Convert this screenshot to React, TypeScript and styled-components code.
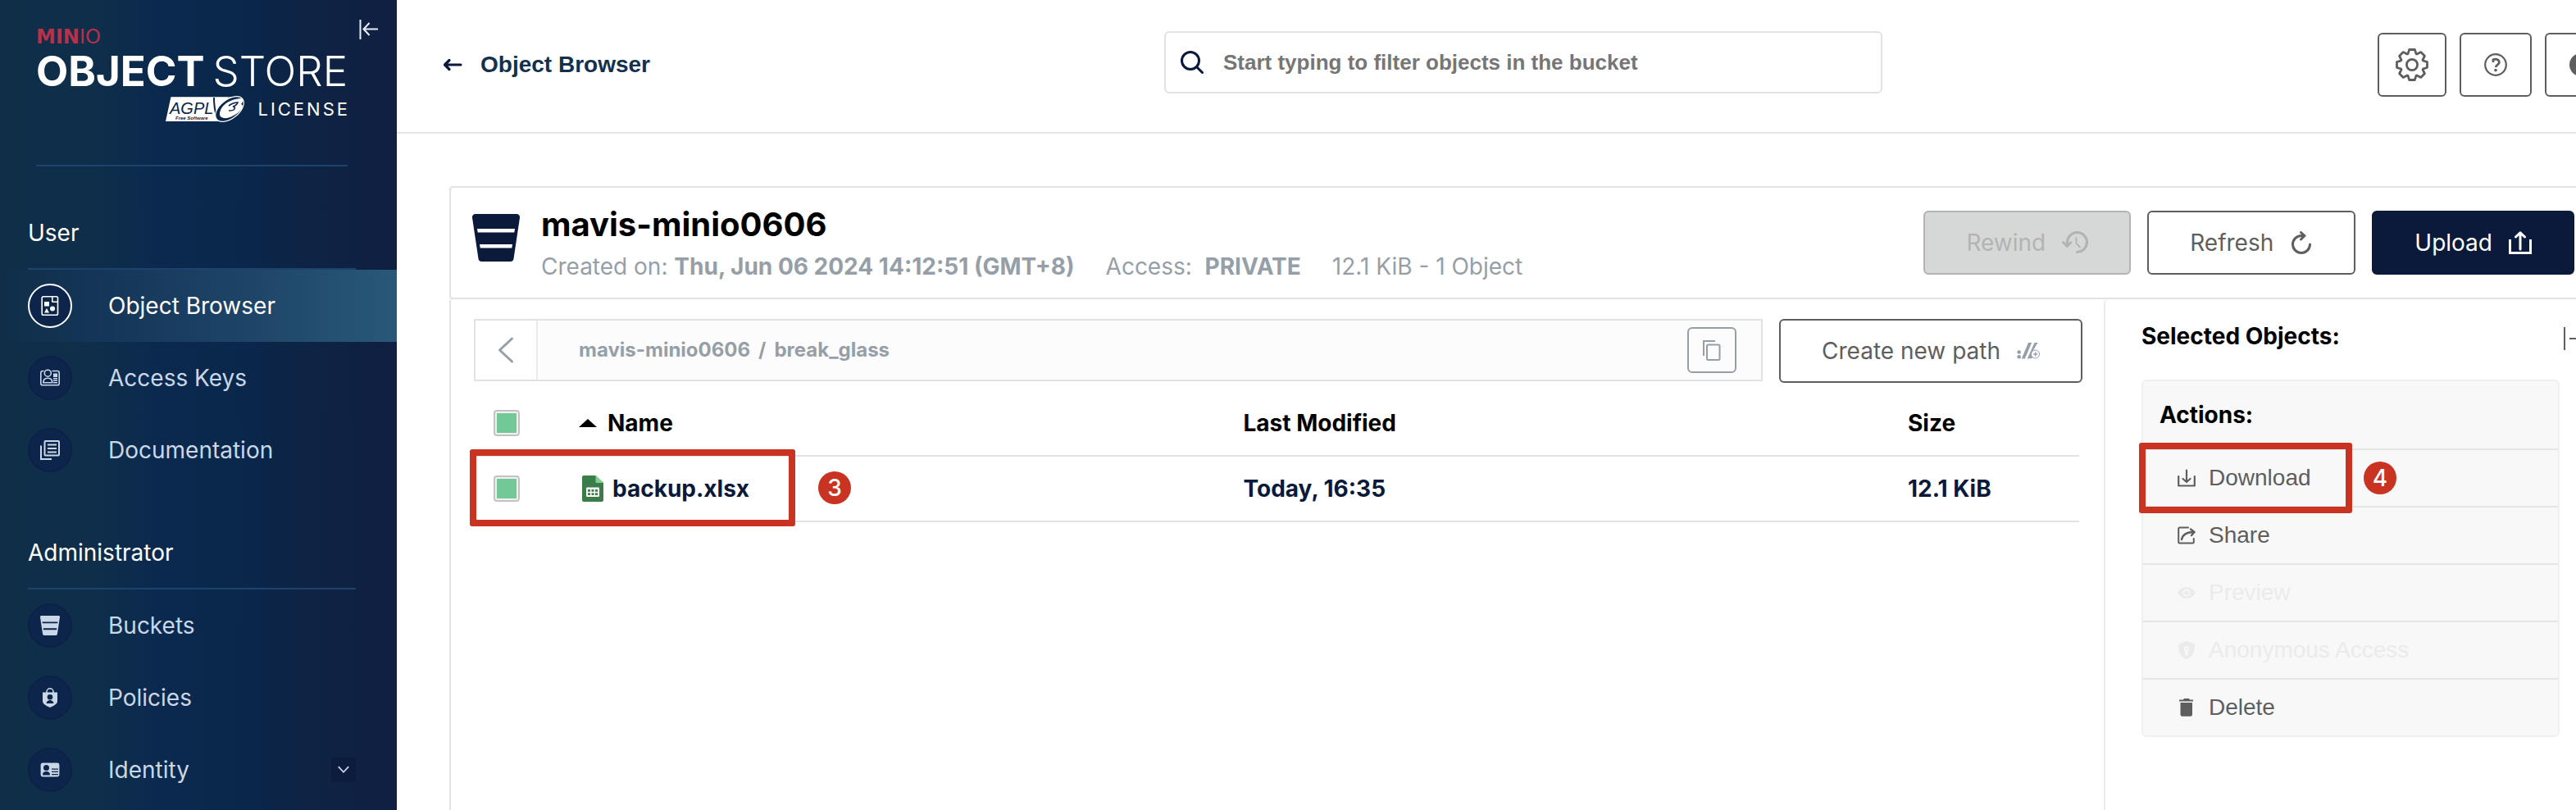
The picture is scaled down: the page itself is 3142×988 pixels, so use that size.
import React from "react";
import styled, { createGlobalStyle, css } from "styled-components";

const color = {
  navy: "#0b193b",
  ink: "#5e5e5e",
  muted: "#969fa8",
  line: "#e2e2e2",
  softLine: "#ebebeb",
  navText: "#c9d7e6",
  mark: "#c93322",
};

const GlobalStyle = createGlobalStyle`
  *, *::before, *::after { box-sizing: border-box; }
  body {
    margin: 0;
    overflow: hidden;
    background: #fff;
    color: #000;
    font-family: Inter, "Liberation Sans", sans-serif;
    font-size: 28px;
    line-height: 34px;
  }
  button, input { font: inherit; color: inherit; }
  button { margin: 0; padding: 0; border: 0; background: none; }
  a { color: inherit; text-decoration: none; }
  ul { margin: 0; padding: 0; list-style: none; }
  h1, h2, h3, p { margin: 0; font-size: inherit; }
`;

/* ---------- icons ---------- */

const Svg = styled.svg<{ $w: number; $h?: number }>`
  display: block;
  flex: none;
  width: ${(p) => p.$w}px;
  height: ${(p) => p.$h ?? p.$w}px;
`;

const CollapseIcon = () => (
  <Svg $w={24} viewBox="0 0 24 24" fill="none" stroke="currentColor" strokeWidth="2">
    <path d="M1.5 0v24M23 11.5H6M12.5 4 5.5 11.5l7 7.5" />
  </Svg>
);

const ExpandIcon = () => (
  <Svg $w={28} viewBox="0 0 28 28" fill="none" stroke="currentColor" strokeWidth="2">
    <path d="M1 0v28M7 14h20M19 5l8 9-8 9" />
  </Svg>
);

const BackArrowIcon = () => (
  <Svg $w={24} viewBox="0 0 24 24" fill="none" stroke="currentColor" strokeWidth="3.2" strokeLinecap="round" strokeLinejoin="round">
    <path d="M22 12H3M8 6.5 2.5 12 8 17.5" />
  </Svg>
);

const SearchIcon = () => (
  <Svg $w={28} viewBox="0 0 28 28" fill="none" stroke={color.navy} strokeWidth="3" strokeLinecap="round">
    <circle cx="12" cy="12" r="10.5" />
    <path d="m20 20 6.5 6.5" />
  </Svg>
);

const gearOutline = (() => {
  const tooth = [
    [-5, -13.4],
    [-3.3, -18.5],
    [3.3, -18.5],
    [5, -13.4],
  ];
  const points: string[] = [];
  for (let i = 0; i < 8; i++) {
    const a = (i * Math.PI) / 4;
    for (const [x, y] of tooth) {
      const px = 20 + x * Math.cos(a) - y * Math.sin(a);
      const py = 20 + x * Math.sin(a) + y * Math.cos(a);
      points.push(`${px.toFixed(2)} ${py.toFixed(2)}`);
    }
  }
  return `M${points.join("L")}Z`;
})();

const GearIcon = () => (
  <Svg $w={40} viewBox="0 0 40 40" fill="none" stroke="currentColor" strokeWidth="2.8" strokeLinejoin="round">
    <path d={gearOutline} />
    <circle cx="20" cy="20" r="6.6" />
  </Svg>
);

const HelpIcon = () => (
  <Svg $w={28} viewBox="0 0 28 28" fill="none" stroke="currentColor" strokeWidth="2.2">
    <circle cx="14" cy="14" r="12.8" />
    <path strokeWidth="2.8" d="M11 11V7.800c4-1.600 7.300.200 7.300 3.200 0 2.800-4 2.800-4 6" />
    <circle cx="14" cy="20.600" r="1.800" fill="currentColor" stroke="none" />
  </Svg>
);

const ThemeIcon = () => (
  <Svg $w={28} viewBox="0 0 28 28">
    <circle cx="14" cy="14" r="14" fill="currentColor" />
  </Svg>
);

const BucketGlyph = ({ size, gap }: { size: number; gap: string }) => (
  <Svg $w={size} viewBox="0 0 58 58">
    <path fill="currentColor" d="M4 0h50a4 4 0 0 1 4 4.500L50.500 54.500a4 4 0 0 1-4 3.500h-35a4 4 0 0 1-4-3.500L0 4.500A4 4 0 0 1 4 0z" />
    <path fill={gap} d="M6 18h46l-.7 4.500H6.700zM9 37h40l-.7 4.500H9.700z" />
  </Svg>
);

const RewindIcon = () => (
  <Svg $w={32} $h={28} viewBox="0 0 32 28" fill="none" stroke="currentColor">
    <path strokeWidth="3.200" strokeLinecap="round" d="M6.500 16V13.500a12 12 0 1 1 12 12" />
    <path strokeWidth="3" strokeLinecap="round" strokeLinejoin="round" d="m1.500 13.500 4.700 5 4.800-4.700" />
    <path strokeWidth="1.800" strokeLinecap="round" d="M17.500 8v7l4.500 4.500" />
  </Svg>
);

const RefreshIcon = () => (
  <Svg $w={28} viewBox="0 0 28 28" fill="none" stroke="currentColor" strokeWidth="3" strokeLinecap="round" strokeLinejoin="round">
    <path d="M24.500 16a10.500 10.500 0 1 1-10.500-10.500h3" />
    <path d="m13.500 1.500 4.500 4-4.500 4.500" />
  </Svg>
);

const UploadIcon = () => (
  <Svg $w={28} viewBox="0 0 28 28" fill="none" stroke="currentColor" strokeWidth="3">
    <path d="M1.500 10v16.500h25V10" />
    <path strokeLinecap="round" strokeLinejoin="round" d="M14 22V2M8.500 7 14 1.800 19.500 7" />
  </Svg>
);

const ChevronLeftIcon = () => (
  <Svg $w={20} $h={32} viewBox="0 0 20 32" fill="none" stroke="currentColor" strokeWidth="3" strokeLinecap="round" strokeLinejoin="round">
    <path d="M17.500 2 2.500 16l15 14" />
  </Svg>
);

const CopyIcon = () => (
  <Svg $w={22} $h={25} viewBox="0 0 22 25" fill="none" stroke="currentColor" strokeWidth="2">
    <path d="M1 19V1h14" />
    <rect x="5" y="5.500" width="15.500" height="18.500" rx="1.500" />
  </Svg>
);

const NewPathIcon = () => (
  <Svg $w={28} $h={20} viewBox="0 0 28 20" fill={color.muted}>
    <circle cx="2.700" cy="11.500" r="2.300" />
    <circle cx="2.700" cy="17.200" r="2.300" />
    <path d="M14 0h4.200L9.800 19.500H5.800zM21.500 0h4L18 12.500l1 6.500-6.200.5z" />
    <circle cx="22.500" cy="14" r="5" fill="#fff" stroke={color.muted} strokeWidth="1" />
    <path d="M22 11.500h1.400v1.800h1.800v1.400h-1.800v1.800H22v-1.800h-1.800v-1.400H22z" />
  </Svg>
);

const SheetFileIcon = () => (
  <Svg $w={26} $h={32} viewBox="0 0 26 32">
    <path fill="#3a7d49" d="M2 0h14.500L26 9v21a2 2 0 0 1-2 2H2a2 2 0 0 1-2-2V2a2 2 0 0 1 2-2z" />
    <path fill="#7fd093" d="M16.500 0 26 9h-8a1.500 1.500 0 0 1-1.500-1.500z" />
    <rect x="5" y="14.500" width="16" height="11.500" rx="1.200" fill="#fff" />
    <path fill="#3a7d49" d="M7 17h3v2.800H7zM11.500 17h3v2.800h-3zM16 17h3v2.800h-3zM7 21.300h3v2.800H7zM11.500 21.300h3v2.800h-3zM16 21.300h3v2.800h-3z" />
  </Svg>
);

const SortIcon = () => (
  <Svg $w={22} $h={10} viewBox="0 0 22 10">
    <path d="M11 0 22 10H0z" />
  </Svg>
);

const DownloadIcon = () => (
  <Svg $w={22} viewBox="0 0 22 22" fill="none" stroke="currentColor" strokeWidth="2.200" strokeLinecap="round" strokeLinejoin="round">
    <path d="M1.200 9v11.500h19.600V9M11 1.500v14M6.500 12l4.500 4 4.500-4" />
  </Svg>
);

const ShareIcon = () => (
  <Svg $w={22} viewBox="0 0 22 22" fill="none" stroke="currentColor" strokeWidth="2" strokeLinecap="round" strokeLinejoin="round">
    <path d="M13 1.500H2.500a1.300 1.300 0 0 0-1.300 1.300v16.400a1.300 1.300 0 0 0 1.300 1.300h16a1.300 1.300 0 0 0 1.300-1.300V15" />
    <path strokeWidth="2.400" d="M5 16c1-5 5-9 15-9M16 3.500 20.500 7 17 11" />
  </Svg>
);

const EyeIcon = () => (
  <Svg $w={22} viewBox="0 0 22 22">
    <path fill="currentColor" fillRule="evenodd" d="M11 4c5 0 9 3 11 7-2 4-6 7-11 7S2 15 0 11c2-4 6-7 11-7zm0 2.500a4.500 4.500 0 1 0 0 9 4.500 4.500 0 0 0 0-9zm0 1.700a2.800 2.800 0 1 1 0 5.600 2.800 2.800 0 0 1 0-5.600z" />
  </Svg>
);

const ShieldIcon = () => (
  <Svg $w={22} viewBox="0 0 22 22">
    <path fill="currentColor" fillRule="evenodd" d="m11 0 10 3.500c.3 9-2 15.500-10 18.500C3 19 .7 12.500 1 3.500zm0 6a3.300 3.300 0 0 0-1.700 6.200V17.500h3.200v-5.300A3.300 3.300 0 0 0 11 6zm0 2a1.300 1.300 0 1 1 0 2.600A1.300 1.300 0 0 1 11 8z" />
  </Svg>
);

const TrashIcon = () => (
  <Svg $w={22} viewBox="0 0 22 22" fill="currentColor">
    <path d="M2 1.500h5L8 0h6l1 1.500h4v2H2zM3.500 5h14.500v14.500a2.300 2.300 0 0 1-2.300 2.300H5.800a2.300 2.300 0 0 1-2.300-2.300z" />
  </Svg>
);

const ObjectBrowserIcon = () => (
  <Svg $w={24} viewBox="0 0 24 24" fill="none" stroke="currentColor" strokeWidth="1.600">
    <rect x="2.200" y="0.800" width="19.300" height="22.400" rx="1.800" />
    <path d="M14.800 1v5.500a.8.8 0 0 0 .8.800h5.400" />
    <path fill="currentColor" stroke="none" d="M5 7h6v5.500H5zM8 15l3 5.500H5z" />
    <circle cx="15" cy="15.500" r="3" fill="currentColor" stroke="none" />
  </Svg>
);

const AccessKeysIcon = () => (
  <Svg $w={24} viewBox="0 0 24 24" fill="none" stroke="currentColor" strokeWidth="1.600">
    <path d="M4.500 3.500H3A2.200 2.200 0 0 0 .8 5.700v13A2.200 2.200 0 0 0 3 20.800h18a2.200 2.200 0 0 0 2.200-2.100v-13A2.200 2.200 0 0 0 21 3.500h-6.500" />
    <circle cx="9.300" cy="6.200" r="4" />
    <path d="M3.800 17.800c0-4 2.500-5.600 5.500-5.600s5.500 1.600 5.500 5.600z" />
    <path fill="currentColor" stroke="none" d="M16 6.500h5V11h-5zM16 12h5v1.600h-5zM16 14.500h5v1.600h-5zM16 17h5v1.400h-5z" />
  </Svg>
);

const DocsIcon = () => (
  <Svg $w={24} viewBox="0 0 24 24" fill="none" stroke="currentColor" strokeWidth="2">
    <path d="M1 6.500V23h13" />
    <rect x="5.500" y="1" width="17.500" height="17.500" rx="1" />
    <path d="M9 5.500h11M9 10h11M9 14.500h11" />
  </Svg>
);

const PoliciesIcon = () => (
  <Svg $w={24} viewBox="0 0 24 24">
    <path fill="none" stroke="currentColor" strokeWidth="1.600" d="M8 7V4.800a4 4 0 0 1 8 0V7" />
    <path fill="currentColor" fillRule="evenodd" d="M3 5.500h18v10.500c0 4-5 6-9 8-4-2-9-4-9-8zM12 8a3.300 3.300 0 1 0 0 6.600A3.300 3.300 0 0 0 12 8zM7.500 19h9c-.5-3-2.500-4-4.500-4s-4 1-4.500 4z" />
  </Svg>
);

const IdentityIcon = () => (
  <Svg $w={24} viewBox="0 0 24 24">
    <path fill="currentColor" fillRule="evenodd" d="M3 3.500h18a2.400 2.400 0 0 1 2.400 2.400v12.200A2.400 2.400 0 0 1 21 20.500H3A2.400 2.400 0 0 1 .6 18.100V5.900A2.400 2.400 0 0 1 3 3.500zM7.500 6a3.500 3.500 0 1 0 0 7 3.500 3.500 0 0 0 0-7zM3 18.500h9c0-3.500-2-4.500-4.500-4.500S3 15 3 18.500zM14 10.500v1.300h8v-1.300zM14 13.800v1.300h8v-1.300zM14 17v1.300h8V17z" />
  </Svg>
);

const ChevronDownIcon = () => (
  <Svg $w={14} $h={10} viewBox="0 0 14 10" fill="none" stroke="currentColor" strokeWidth="1.800">
    <path d="M.8 1.200 7 7.800l6.200-6.600" />
  </Svg>
);

const AgplBadge = () => (
  <Svg $w={96} $h={32} viewBox="0 0 96 32" role="img" aria-label="AGPL v3, Free Software">
    <path fill="#fff" d="M6.500 1.300H80L64 31H0z" />
    <text x="5" y="22" fontFamily="Liberation Sans, sans-serif" fontStyle="italic" fontSize="20" letterSpacing="0" fill="#0b2649">AGPL</text>
    <text x="12" y="28.500" fontFamily="Liberation Sans, sans-serif" fontStyle="italic" fontWeight="700" fontSize="6" letterSpacing="0" fill="#0b2649">Free Software</text>
    <path fill="none" stroke="#0b2649" strokeWidth="2" d="M59 2c0 8 1 16 3 22L78 2" />
    <ellipse cx="78" cy="16" rx="20" ry="11.500" transform="rotate(-38 78 16)" fill="#0b2649" stroke="#fff" strokeWidth="1.200" />
    <path fill="#fff" d="M66 23c0-9 8-18 25-20 4 0 5 3 1 7 3 1 2 5-1 8-6 6-15 10-20 9-3-1-5-2-5-4z" />
    <path fill="none" stroke="#0b2649" strokeWidth="1.600" d="M77 12c4-3 8-4 11-4-1 3-3 4-6 5 2 0 3 1 2 3s-4 2-7 2" />
  </Svg>
);

/* ---------- page shell ---------- */

/* The console keeps its full width and runs past the right edge of the window. */
const Shell = styled.div`
  display: flex;
  width: calc(100% + 90px);
  min-height: 100vh;
`;

const Sidebar = styled.aside`
  flex: none;
  width: 484px;
  color: #fff;
  background: linear-gradient(90deg, #102e48 0%, #0e2e4b 25%, #0b294e 40%, #0a264b 64%, #0c2546 70%, #0f2244 85%, #101f42 100%);
`;

const SidebarHead = styled.div`
  display: flex;
  justify-content: space-between;
  align-items: flex-start;
  padding: 24px 22px 0 44px;
  color: #e8edf3;
`;

const Logo = styled.div`
  width: 380px;
  margin-top: 12px;
  padding-bottom: 52px;
  border-bottom: 2px solid #1d436c;
  color: #fff;
  white-space: nowrap;
`;

const LogoBrand = styled.div`
  font-family: "DejaVu Sans", sans-serif;
  font-size: 24px;
  line-height: 18px;
  font-weight: 700;
  color: #b8304a;

  span { font-weight: 400; }
`;

const LogoName = styled.div`
  display: flex;
  justify-content: space-between;
  margin-top: 5px;
  font-size: 51px;
  line-height: 56px;
  font-weight: 700;

  span { font-weight: 300; }
`;

const LogoLicense = styled.div`
  display: flex;
  justify-content: flex-end;
  align-items: center;
  gap: 16px;
  margin: 2px -3px 0 0;
  font-size: 22px;
  line-height: 32px;
  letter-spacing: 3px;
`;

const NavSection = styled.section`
  padding-top: 64px;
`;

const NavTitle = styled.h2`
  margin: 0 50px 0 34px;
  padding-bottom: 26px;
  border-bottom: 2px solid #1d436c;
  font-weight: 400;
`;

const NavLink = styled.a<{ $active?: boolean }>`
  display: flex;
  align-items: center;
  height: 88px;
  padding: 0 50px 0 34px;
  color: ${(p) => (p.$active ? "#fff" : color.navText)};
  ${(p) => p.$active && css`background: linear-gradient(90deg, transparent 0%, #17395c 35%, #1e4668 65%, #295878 100%);`}
`;

const NavBubble = styled.span<{ $active?: boolean }>`
  display: grid;
  place-items: center;
  width: 54px;
  height: 54px;
  margin-right: 44px;
  border: 2px solid ${(p) => (p.$active ? "#fff" : "#0b2148")};
  border-radius: 50%;
  background: #0d254b;
`;

const NavToggle = styled.span`
  display: grid;
  place-items: center;
  width: 30px;
  height: 30px;
  margin-left: auto;
  border-radius: 4px;
  background: #0d1b3c;
`;

const Main = styled.main`
  flex: 1;
  min-width: 0;
  display: flex;
  flex-direction: column;
`;

/* ---------- top bar ---------- */

const TopBar = styled.header`
  display: grid;
  grid-template-columns: 1fr minmax(0, 876px) 1fr;
  align-items: start;
  height: 163px;
  padding: 38px 40px 0;
  border-bottom: 2px solid #e5e5e5;
`;

const BackLink = styled.a`
  display: flex;
  align-items: center;
  gap: 22px;
  height: 82px;
  padding-left: 16px;
  font-family: "Liberation Sans", Arial, sans-serif;
  font-weight: 700;
  color: #14304f;

  svg { color: ${color.navy}; }
`;

const SearchBox = styled.label`
  display: flex;
  align-items: center;
  gap: 24px;
  height: 76px;
  padding: 0 18px;
  border: 2px solid ${color.line};
  border-radius: 6px;
`;

const SearchInput = styled.input`
  flex: 1;
  min-width: 0;
  padding: 0;
  border: 0;
  outline: 0;
  background: none;
  font-family: "Liberation Sans", Arial, sans-serif;
  font-size: 26px;
  font-weight: 700;

  &::placeholder { color: #767676; opacity: 1; }
`;

const TopActions = styled.div`
  display: flex;
  justify-content: flex-end;
  gap: 16px;
  padding-top: 2px;
`;

const IconButton = styled.button<{ $w: number }>`
  display: grid;
  place-items: center;
  width: ${(p) => p.$w}px;
  height: 78px;
  border: 2px solid ${color.ink};
  border-radius: 6px;
  color: ${color.ink};
`;

/* ---------- bucket card ---------- */

const Card = styled.section`
  flex: 1;
  display: flex;
  flex-direction: column;
  margin: 64px 64px 0;
`;

const CardHead = styled.div`
  display: flex;
  align-items: center;
  padding: 21px 26px;
  border: 2px solid ${color.line};
  border-radius: 4px;
  white-space: nowrap;
`;

const BucketMark = styled.div`
  align-self: flex-start;
  margin: 11px 26px 0 0;
  color: ${color.navy};
`;

const BucketName = styled.h1`
  font-size: 40px;
  line-height: 48px;
  font-weight: 700;
`;

const BucketMeta = styled.p`
  display: flex;
  gap: 38px;
  margin-top: 10px;
  color: ${color.muted};
`;

const HeadActions = styled.div`
  display: flex;
  gap: 20px;
  margin-left: auto;
`;

type Tone = "outline" | "solid" | "off";

const tones = {
  outline: css`border-color: ${color.ink}; color: ${color.ink};`,
  solid: css`border-color: ${color.navy}; background: ${color.navy}; color: #fff;`,
  off: css`border-color: #b3b3b3; background: #d6d8d7; color: #b3b3b3;`,
};

const Button = styled.button<{ $tone: Tone }>`
  display: flex;
  align-items: center;
  gap: 20px;
  height: 78px;
  padding: 0 50px;
  border: 2px solid;
  border-radius: 6px;
  white-space: nowrap;
  ${(p) => tones[p.$tone]}
`;

const CardBody = styled.div`
  flex: 1;
  display: flex;
  border: 2px solid ${color.line};
  border-width: 0 2px;
  border-radius: 4px 4px 0 0;
`;

const Browser = styled.div`
  flex: 1;
  min-width: 0;
  padding: 24px 26px 0 28px;
`;

const PathRow = styled.div`
  display: flex;
  gap: 20px;
`;

const PathBar = styled.nav`
  flex: 1;
  display: flex;
  align-items: center;
  height: 76px;
  padding-right: 30px;
  border: 2px solid ${color.line};
  background: #fcfcfc;
  color: ${color.muted};
  font-size: 24px;
  font-weight: 700;
`;

const PathBack = styled.button`
  display: grid;
  place-items: center;
  width: 76px;
  height: 100%;
  margin-right: 50px;
  border-right: 2px solid ${color.softLine};
  background: #fff;
`;

const Crumbs = styled.span`
  display: flex;
  gap: 10px;
`;

const CopyButton = styled.button`
  display: grid;
  place-items: center;
  width: 60px;
  height: 56px;
  margin-left: auto;
  border: 2px solid ${color.muted};
  border-radius: 6px;
`;

const ObjectTable = styled.table`
  width: calc(100% - 4px);
  margin-top: 10px;
  border-collapse: separate;
  border-spacing: 0;
  table-layout: fixed;
  text-align: left;

  th, td {
    position: relative;
    height: 80px;
    padding: 0;
    border-bottom: 2px solid ${color.line};
    font-weight: 700;
  }
  td { color: ${color.navy}; }
  th:nth-child(1) { width: 128px; }
  th:nth-child(4) { width: 209px; }
`;

const CheckBox = styled.input`
  appearance: none;
  display: block;
  width: 32px;
  height: 32px;
  margin: 0 0 0 24px;
  border: 2px solid #c3c3c3;
  border-radius: 4px;
  background: #f0f0f0;

  &:checked {
    background: #72c997 content-box;
    padding: 2px;
    box-shadow: inset 0 0 0 2px #f0f0f0;
  }
`;

const NameCell = styled.span<{ $gap: number; $pad?: number }>`
  display: flex;
  align-items: center;
  gap: ${(p) => p.$gap}px;
  padding-left: ${(p) => p.$pad ?? 0}px;
`;

/* ---------- selection panel ---------- */

const Panel = styled.aside`
  flex: none;
  width: 600px;
  border-left: 2px solid ${color.softLine};
  border-top-left-radius: 6px;
`;

const PanelHead = styled.div`
  display: flex;
  justify-content: space-between;
  align-items: flex-end;
  padding: 28px 11px 36px 44px;

  h2 { font-weight: 700; }
  button { color: ${color.ink}; }
`;

const Actions = styled.ul`
  margin: 0 44px;
  border: 2px solid #f0f0f0;
  border-radius: 6px;
  background: #f8f8f8;

  li { position: relative; }
  li + li { border-top: 2px solid #e5e5e5; }
`;

const ActionsTitle = styled.li`
  padding: 24px 20px;
  font-weight: 700;
`;

const ActionButton = styled.button`
  display: flex;
  align-items: center;
  gap: 16px;
  width: 100%;
  height: 68px;
  padding: 0 42px;
  font-family: "Liberation Sans", Arial, sans-serif;
  color: ${color.ink};

  &:disabled { color: #ebebeb; }
`;

/* ---------- step annotations ---------- */

const MarkFrame = styled.span<{ $w: number; $h: number }>`
  position: absolute;
  z-index: 1;
  left: -5px;
  top: -9px;
  width: ${(p) => p.$w}px;
  height: ${(p) => p.$h}px;
  border: 8px solid ${color.mark};
  border-radius: 3px;
  pointer-events: none;
`;

const MarkNumber = styled.span<{ $gap: number }>`
  position: absolute;
  left: calc(100% + ${(p) => p.$gap}px);
  top: 50%;
  width: 40px;
  height: 40px;
  margin-top: -20px;
  border-radius: 50%;
  background: ${color.mark};
  color: #fff;
  font-family: Inter, sans-serif;
  font-size: 28px;
  line-height: 40px;
  font-weight: 500;
  text-align: center;
`;

type NavEntry = { label: string; icon: React.ReactNode; active?: boolean; nested?: boolean };

const userNav: NavEntry[] = [
  { label: "Object Browser", icon: <ObjectBrowserIcon />, active: true },
  { label: "Access Keys", icon: <AccessKeysIcon /> },
  { label: "Documentation", icon: <DocsIcon /> },
];

const adminNav: NavEntry[] = [
  { label: "Buckets", icon: <BucketGlyph size={24} gap="#0d254b" /> },
  { label: "Policies", icon: <PoliciesIcon /> },
  { label: "Identity", icon: <IdentityIcon />, nested: true },
];

const NavGroup = ({ title, items }: { title: string; items: NavEntry[] }) => (
  <NavSection>
    <NavTitle>{title}</NavTitle>
    <ul>
      {items.map((item) => (
        <li key={item.label}>
          <NavLink href="#" $active={item.active}>
            <NavBubble $active={item.active}>{item.icon}</NavBubble>
            {item.label}
            {item.nested && (
              <NavToggle>
                <ChevronDownIcon />
              </NavToggle>
            )}
          </NavLink>
        </li>
      ))}
    </ul>
  </NavSection>
);

const objectActions = [
  { label: "Download", icon: <DownloadIcon />, step: 4 },
  { label: "Share", icon: <ShareIcon /> },
  { label: "Preview", icon: <EyeIcon />, disabled: true },
  { label: "Anonymous Access", icon: <ShieldIcon />, disabled: true },
  { label: "Delete", icon: <TrashIcon /> },
];

export default function App() {
  return (
    <>
      <GlobalStyle />
      <Shell>
        <Sidebar>
          <SidebarHead>
            <Logo>
              <LogoBrand>
                MIN<span>IO</span>
              </LogoBrand>
              <LogoName>
                OBJECT <span>STORE</span>
              </LogoName>
              <LogoLicense>
                <AgplBadge />
                LICENSE
              </LogoLicense>
            </Logo>
            <button type="button" aria-label="Collapse menu">
              <CollapseIcon />
            </button>
          </SidebarHead>
          <nav>
            <NavGroup title="User" items={userNav} />
            <NavGroup title="Administrator" items={adminNav} />
          </nav>
        </Sidebar>

        <Main>
          <TopBar>
            <BackLink href="#">
              <BackArrowIcon />
              Object Browser
            </BackLink>
            <SearchBox>
              <SearchIcon />
              <SearchInput
                type="text"
                aria-label="Filter objects"
                placeholder="Start typing to filter objects in the bucket"
              />
            </SearchBox>
            <TopActions>
              <IconButton type="button" $w={84} aria-label="Settings">
                <GearIcon />
              </IconButton>
              <IconButton type="button" $w={88} aria-label="Help">
                <HelpIcon />
              </IconButton>
              <IconButton type="button" $w={88} aria-label="Dark mode">
                <ThemeIcon />
              </IconButton>
            </TopActions>
          </TopBar>

          <Card>
            <CardHead>
              <BucketMark>
                <BucketGlyph size={58} gap="#fff" />
              </BucketMark>
              <div>
                <BucketName>mavis-minio0606</BucketName>
                <BucketMeta>
                  <span>
                    Created on: <strong>Thu, Jun 06 2024 14:12:51 (GMT+8)</strong>
                  </span>
                  <span>
                    Access:&nbsp; <strong>PRIVATE</strong>
                  </span>
                  <span>12.1 KiB - 1 Object</span>
                </BucketMeta>
              </div>
              <HeadActions>
                <Button type="button" $tone="off" disabled>
                  Rewind
                  <RewindIcon />
                </Button>
                <Button type="button" $tone="outline">
                  Refresh
                  <RefreshIcon />
                </Button>
                <Button type="button" $tone="solid">
                  Upload
                  <UploadIcon />
                </Button>
              </HeadActions>
            </CardHead>

            <CardBody>
              <Browser>
                <PathRow>
                  <PathBar aria-label="Current path">
                    <PathBack type="button" aria-label="Up one level">
                      <ChevronLeftIcon />
                    </PathBack>
                    <Crumbs>
                      <a href="#">mavis-minio0606</a>
                      <span>/</span>
                      <a href="#">break_glass</a>
                    </Crumbs>
                    <CopyButton type="button" aria-label="Copy path">
                      <CopyIcon />
                    </CopyButton>
                  </PathBar>
                  <Button type="button" $tone="outline">
                    Create new path
                    <NewPathIcon />
                  </Button>
                </PathRow>

                <ObjectTable>
                  <thead>
                    <tr>
                      <th>
                        <CheckBox type="checkbox" defaultChecked aria-label="Select all objects" />
                      </th>
                      <th>
                        <NameCell $gap={13}>
                          <SortIcon />
                          Name
                        </NameCell>
                      </th>
                      <th>Last Modified</th>
                      <th>Size</th>
                    </tr>
                  </thead>
                  <tbody>
                    <tr>
                      <td>
                        <CheckBox type="checkbox" defaultChecked aria-label="Select backup.xlsx" />
                        <MarkFrame $w={397} $h={94}>
                          <MarkNumber $gap={36}>3</MarkNumber>
                        </MarkFrame>
                      </td>
                      <td>
                        <NameCell $gap={11} $pad={4}>
                          <SheetFileIcon />
                          backup.xlsx
                        </NameCell>
                      </td>
                      <td>Today, 16:35</td>
                      <td>12.1 KiB</td>
                    </tr>
                  </tbody>
                </ObjectTable>
              </Browser>

              <Panel>
                <PanelHead>
                  <h2>Selected Objects:</h2>
                  <button type="button" aria-label="Close panel">
                    <ExpandIcon />
                  </button>
                </PanelHead>
                <Actions>
                  <ActionsTitle>Actions:</ActionsTitle>
                  {objectActions.map((action) => (
                    <li key={action.label}>
                      <ActionButton type="button" disabled={action.disabled}>
                        {action.icon}
                        {action.label}
                      </ActionButton>
                      {action.step && (
                        <MarkFrame $w={260} $h={86}>
                          <MarkNumber $gap={22}>{action.step}</MarkNumber>
                        </MarkFrame>
                      )}
                    </li>
                  ))}
                </Actions>
              </Panel>
            </CardBody>
          </Card>
        </Main>
      </Shell>
    </>
  );
}
